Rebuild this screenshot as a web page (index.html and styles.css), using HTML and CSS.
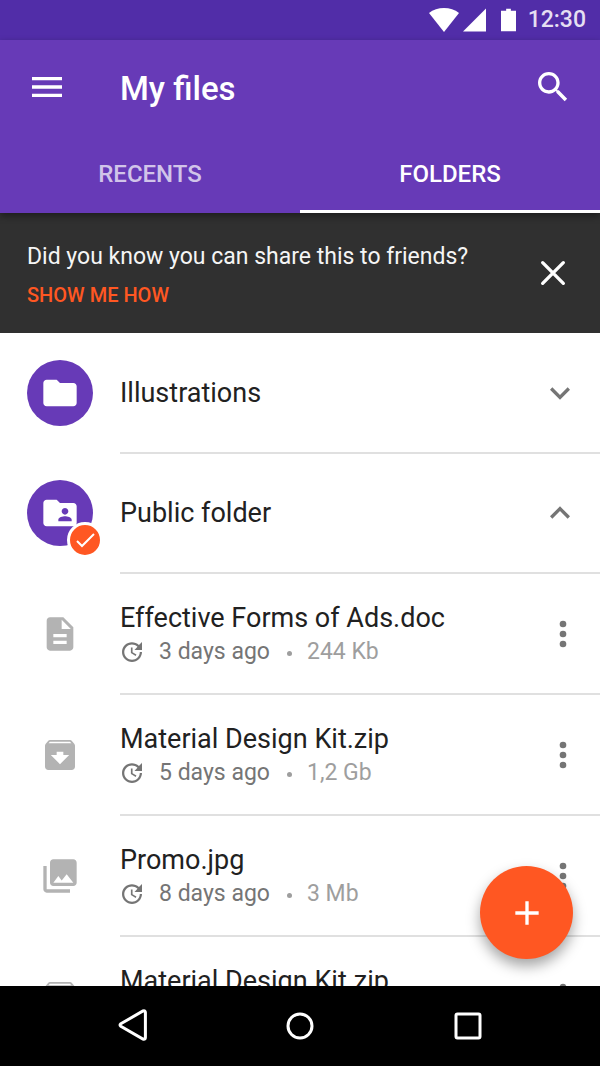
FILE: index.html
```html
<!DOCTYPE html>
<html lang="en">
<head>
  <meta charset="utf-8">
  <meta name="viewport" content="width=device-width, initial-scale=1">
  <title>My files</title>
  <link rel="stylesheet" href="styles.css">
</head>
<body>
  <svg class="sprite" aria-hidden="true">
    <symbol id="archive" viewBox="0 0 24 24"><path d="M20.54 5.23l-1.39-1.68C18.88 3.21 18.47 3 18 3H6c-.47 0-.88.21-1.16.55L3.46 5.23C3.17 5.57 3 6.02 3 6.5V19c0 1.1.9 2 2 2h14c1.1 0 2-.9 2-2V6.5c0-.48-.17-.93-.46-1.27zM12 17.5L6.5 12H10v-2h4v2h3.500L12 17.5zM5.12 5l.81-1h12l.94 1H5.12z"/></symbol>
    <symbol id="update" viewBox="3 3 18 18"><path d="M21 10.120h-6.780l2.740-2.820c-2.730-2.700-7.150-2.800-9.880-.1-2.730 2.710-2.730 7.080 0 9.790s7.150 2.710 9.880 0C18.320 15.650 19 14.080 19 12.100h2c0 1.980-.88 4.550-2.640 6.290-3.510 3.480-9.210 3.480-12.720 0-3.500-3.470-3.530-9.110-.02-12.580s9.140-3.470 12.650 0L21 3v7.120zM12.500 8v4.250l3.500 2.080-.72 1.210L11 13V8h1.500z"/></symbol>
    <symbol id="more" viewBox="0 0 24 24"><circle cx="12" cy="6" r="2"/><circle cx="12" cy="12" r="2"/><circle cx="12" cy="18" r="2"/></symbol>
  </svg>

  <div class="status-bar">
    <svg class="status-wifi" viewBox="0 0 30 24" aria-hidden="true"><path d="M0 5C8-1.600 22-1.600 30 5L15 24z"/></svg>
    <svg class="status-signal" viewBox="0 0 24 24" aria-hidden="true"><path d="M24 0v24H0z"/></svg>
    <svg class="status-battery" viewBox="0 0 16 24" aria-hidden="true"><path d="M5.500 0h5v2H16v22H0V2h5.500z"/></svg>
    <time class="clock">12:30</time>
  </div>

  <header class="app-bar">
    <div class="toolbar">
      <button class="icon-button" type="button" aria-label="Menu"><svg class="icon" viewBox="0 0 24 24"><path d="M3 18h18v-2H3v2zm0-5h18v-2H3v2zm0-7v2h18V6H3z"/></svg></button>
      <h1 class="title">My files</h1>
      <button class="icon-button" type="button" aria-label="Search"><svg class="icon" viewBox="0 0 24 24"><path d="M15.500 14h-.79l-.28-.27C15.410 12.590 16 11.110 16 9.500 16 5.910 13.090 3 9.500 3S3 5.910 3 9.500 5.910 16 9.500 16c1.610 0 3.090-.59 4.230-1.570l.27.28v.79l5 4.990L20.490 19l-4.990-5zm-6 0C7.010 14 5 11.990 5 9.500S7.010 5 9.500 5 14 7.010 14 9.500 11.990 14 9.500 14z"/></svg></button>
    </div>
    <nav class="tabs" role="tablist">
      <button class="tab" type="button" role="tab" aria-selected="false">RECENTS</button>
      <button class="tab tab-active" type="button" role="tab" aria-selected="true">FOLDERS</button>
    </nav>
  </header>

  <aside class="banner">
    <div class="banner-text">
      <p class="banner-message">Did you know you can share this to friends?</p>
      <a class="banner-link" href="#share">SHOW ME HOW</a>
    </div>
    <button class="icon-button" type="button" aria-label="Dismiss"><svg class="icon icon-line" viewBox="0 0 24 24"><path d="M5.800 5.800l12.400 12.400M18.200 5.800L5.800 18.200"/></svg></button>
  </aside>

  <main class="content">
    <ul class="list">
      <li class="row row-folder">
        <span class="leading avatar"><svg class="icon" viewBox="0 0 24 24" aria-hidden="true"><path d="M10 4H4c-1.100 0-2 .9-2 2v12c0 1.100.9 2 2 2h16c1.100 0 2-.9 2-2V8c0-1.100-.9-2-2-2h-8l-2-2z"/></svg></span>
        <div class="row-body">
          <h2 class="name">Illustrations</h2>
          <button class="icon-button" type="button" aria-label="Expand Illustrations" aria-expanded="false"><svg class="icon" viewBox="0 0 24 24"><path d="M16.590 8.590L12 13.170 7.410 8.590 6 10l6 6 6-6z"/></svg></button>
        </div>
      </li>
      <li class="row row-folder">
        <span class="leading avatar">
          <svg class="icon" viewBox="0 0 24 24" aria-hidden="true"><path fill-rule="evenodd" d="M20 6h-8l-2-2H4c-1.100 0-1.990.9-1.990 2L2 18c0 1.100.9 2 2 2h16c1.100 0 2-.9 2-2V8c0-1.100-.9-2-2-2zm-5 3c1.100 0 2 .9 2 2s-.9 2-2 2-2-.9-2-2 .9-2 2-2zm4 8h-8v-1c0-1.330 2.670-2 4-2s4 .67 4 2v1z"/></svg>
          <span class="badge"><svg class="badge-icon" viewBox="0 0 30 30" aria-hidden="true"><path d="M7 16l5 5L24 9"/></svg></span>
        </span>
        <div class="row-body">
          <h2 class="name">Public folder</h2>
          <button class="icon-button" type="button" aria-label="Collapse Public folder" aria-expanded="true"><svg class="icon" viewBox="0 0 24 24"><path d="M12 8l-6 6 1.410 1.410L12 10.830l4.590 4.580L18 14z"/></svg></button>
        </div>
      </li>
      <li class="row row-file">
        <span class="leading"><svg class="icon" viewBox="0 0 24 24" aria-hidden="true"><path d="M14 2H6c-1.100 0-1.990.9-1.990 2L4 20c0 1.100.89 2 1.990 2H18c1.100 0 2-.9 2-2V8l-6-6zm2 16H8v-2h8v2zm0-4H8v-2h8v2zm-3-5V3.500L18.500 9H13z"/></svg></span>
        <div class="row-body">
          <div class="text">
            <h3 class="name">Effective Forms of Ads.doc</h3>
            <p class="meta"><svg class="meta-icon" aria-hidden="true"><use href="#update"/></svg><span class="meta-time">3 days ago</span><span class="meta-dot"></span><span class="meta-size">244 Kb</span></p>
          </div>
          <button class="icon-button" type="button" aria-label="More options"><svg class="icon"><use href="#more"/></svg></button>
        </div>
      </li>
      <li class="row row-file">
        <span class="leading"><svg class="icon" aria-hidden="true"><use href="#archive"/></svg></span>
        <div class="row-body">
          <div class="text">
            <h3 class="name">Material Design Kit.zip</h3>
            <p class="meta"><svg class="meta-icon" aria-hidden="true"><use href="#update"/></svg><span class="meta-time">5 days ago</span><span class="meta-dot"></span><span class="meta-size">1,2 Gb</span></p>
          </div>
          <button class="icon-button" type="button" aria-label="More options"><svg class="icon"><use href="#more"/></svg></button>
        </div>
      </li>
      <li class="row row-file">
        <span class="leading"><svg class="icon" viewBox="0 0 24 24" aria-hidden="true"><path d="M22 16V4c0-1.100-.9-2-2-2H8c-1.100 0-2 .9-2 2v12c0 1.100.9 2 2 2h12c1.100 0 2-.9 2-2zm-11-4l2.030 2.710L16 11l4 5H8l3-4zM2 6v14c0 1.100.9 2 2 2h14v-2H4V6H2z"/></svg></span>
        <div class="row-body">
          <div class="text">
            <h3 class="name">Promo.jpg</h3>
            <p class="meta"><svg class="meta-icon" aria-hidden="true"><use href="#update"/></svg><span class="meta-time">8 days ago</span><span class="meta-dot"></span><span class="meta-size">3 Mb</span></p>
          </div>
          <button class="icon-button" type="button" aria-label="More options"><svg class="icon"><use href="#more"/></svg></button>
        </div>
      </li>
      <li class="row row-file">
        <span class="leading"><svg class="icon" aria-hidden="true"><use href="#archive"/></svg></span>
        <div class="row-body">
          <div class="text">
            <h3 class="name">Material Design Kit.zip</h3>
            <p class="meta"></p>
          </div>
          <button class="icon-button" type="button" aria-label="More options"><svg class="icon"><use href="#more"/></svg></button>
        </div>
      </li>
    </ul>
    <button class="fab" type="button" aria-label="Add"><svg class="icon" viewBox="0 0 24 24"><path d="M19 13h-6v6h-2v-6H5v-2h6V5h2v6h6v2z"/></svg></button>
  </main>

  <nav class="system-bar">
    <button class="system-button" type="button" aria-label="Back"><svg class="system-icon" viewBox="0 0 36 36"><path d="M6.800 15.800L29 3Q31.400 2.200 31.400 4.600V29.400Q31.400 31.800 29 31L6.800 18.200Q5.200 17 6.800 15.800z"/></svg></button>
    <button class="system-button" type="button" aria-label="Home"><svg class="system-icon" viewBox="0 0 36 36"><circle cx="18" cy="18" r="12"/></svg></button>
    <button class="system-button" type="button" aria-label="Recent apps"><svg class="system-icon" viewBox="0 0 36 36"><rect x="6" y="6" width="24" height="24" rx="1.500"/></svg></button>
  </nav>
</body>
</html>
```

FILE: styles.css
```css
* {
  box-sizing: border-box;
}

body {
  display: flex;
  flex-direction: column;
  height: 100vh;
  margin: 0;
  overflow: hidden;
  background: #fff;
  color: #212121;
  font-family: Roboto, "Liberation Sans", sans-serif;
}

h1,
h2,
h3,
p,
ul {
  margin: 0;
  padding: 0;
  font-weight: 400;
}

button {
  padding: 0;
  border: 0;
  background: none;
  color: inherit;
  font: inherit;
  cursor: pointer;
}

.sprite {
  display: none;
}

.icon {
  display: block;
  width: 40px;
  height: 40px;
  fill: currentColor;
}

.icon-line {
  fill: none;
  stroke: currentColor;
  stroke-width: 2;
  stroke-linecap: round;
}

.icon-button {
  flex: none;
}

/* Status bar */

.status-bar {
  display: flex;
  flex: none;
  align-items: center;
  justify-content: flex-end;
  height: 40px;
  padding-right: 14px;
  background: #512da8;
  fill: #fff;
}

.status-wifi {
  width: 30px;
  height: 24px;
  margin-right: 4px;
}

.status-signal {
  width: 23px;
  height: 24px;
  margin-right: 15px;
}

.status-battery {
  width: 15px;
  height: 24px;
  margin-right: 12px;
}

.clock {
  color: #e5dff2;
  font-size: 23px;
  font-weight: 500;
  line-height: 40px;
}

/* App bar */

.app-bar {
  position: relative;
  z-index: 1;
  flex: none;
  background: #673ab7;
  box-shadow: 0 3px 7px rgba(0, 0, 0, 0.4);
  color: #fff;
}

.toolbar {
  display: flex;
  align-items: center;
  height: 93px;
  padding: 0 27px;
}

.title {
  flex: 1;
  padding: 4px 0 0 53px;
  font-size: 33px;
  font-weight: 500;
  line-height: 40px;
}

.tabs {
  display: grid;
  grid-template-columns: 1fr 1fr;
}

.tab {
  height: 80px;
  padding-top: 4px;
  border-bottom: 3px solid transparent;
  color: #d1c4e9;
  font-size: 24px;
  font-weight: 500;
}

.tab-active {
  border-bottom-color: #fff;
  color: #fff;
}

/* Tip banner */

.banner {
  display: flex;
  flex: none;
  align-items: center;
  height: 120px;
  padding: 0 27px;
  background: #303030;
  color: #fff;
}

.banner-text {
  flex: 1;
  padding-top: 8px;
}

.banner-message {
  color: #f5f5f5;
  font-size: 23px;
  line-height: 36px;
}

.banner-link {
  display: block;
  color: #ff5722;
  font-size: 20px;
  font-weight: 500;
  line-height: 40px;
  text-decoration: none;
}

/* File list */

.content {
  position: relative;
  flex: 1;
  min-height: 0;
}

.list {
  height: 100%;
  padding-top: 1px;
  overflow: hidden;
  list-style: none;
}

.row {
  display: grid;
  grid-template-columns: 66px 1fr;
  column-gap: 27px;
  align-items: center;
  padding-left: 27px;
}

.leading {
  display: grid;
  place-items: center;
  margin-bottom: 2px;
  color: #b3b3b3;
}

.avatar {
  position: relative;
  width: 66px;
  height: 66px;
  border-radius: 50%;
  background: #673ab7;
  color: #fff;
}

.badge {
  position: absolute;
  right: -10px;
  bottom: -12px;
  border: 3px solid #fff;
  border-radius: 50%;
  background: #ff5722;
}

.badge-icon {
  display: block;
  width: 30px;
  height: 30px;
  fill: none;
  stroke: #fff;
  stroke-width: 2;
}

.row-body {
  display: flex;
  align-items: center;
  justify-content: space-between;
  border-bottom: 2px solid #e0e0e0;
  color: #757575;
}

.row-folder .row-body {
  height: 120px;
  padding-right: 20px;
}

.row-file .row-body {
  height: 121px;
  padding-right: 17px;
}

.name {
  color: #212121;
  font-size: 27px;
  line-height: 36px;
}

.meta {
  display: flex;
  align-items: center;
  height: 32px;
  font-size: 23px;
  line-height: 32px;
}

.meta-icon {
  width: 20px;
  height: 20px;
  margin: 0 17px 0 2px;
  fill: #757575;
}

.meta-dot {
  width: 5px;
  height: 5px;
  margin: 3px 15px 0 17px;
  border-radius: 50%;
  background: #9e9e9e;
}

.meta-size {
  color: #9e9e9e;
}

.fab {
  position: absolute;
  right: 27px;
  bottom: 27px;
  display: grid;
  place-items: center;
  width: 93px;
  height: 93px;
  border-radius: 50%;
  background: #ff5722;
  box-shadow: 0 7px 14px rgba(0, 0, 0, 0.36);
  color: #fff;
}

/* System navigation */

.system-bar {
  display: grid;
  flex: none;
  grid-template-columns: repeat(3, 1fr);
  height: 80px;
  padding: 0 8%;
  background: #000;
}

.system-button {
  display: grid;
  place-items: center;
}

.system-icon {
  width: 36px;
  height: 36px;
  fill: none;
  stroke: #fff;
  stroke-width: 3;
}
```
